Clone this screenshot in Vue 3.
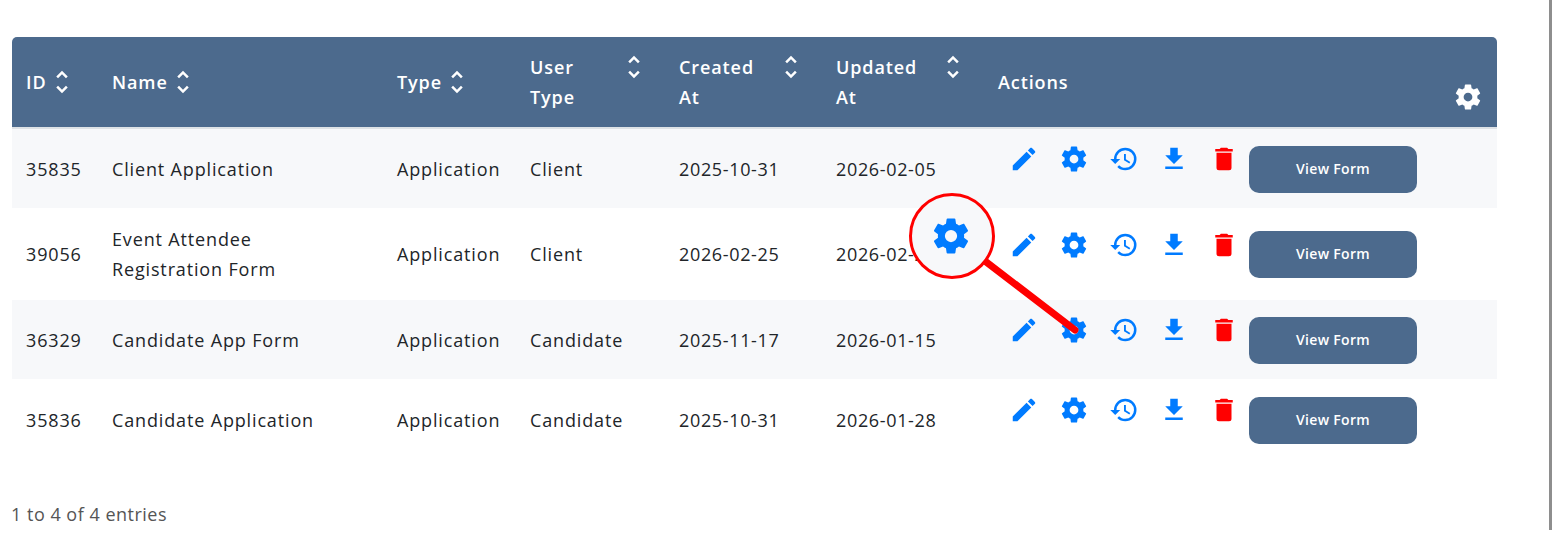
<script setup>
const icons = {
  pencil: 'M20.71,7.04C21.1,6.65 21.1,6 20.71,5.63L18.37,3.29C18,2.9 17.35,2.9 16.96,3.29L15.12,5.12L18.87,8.87M3,17.25V21H6.75L17.81,9.93L14.06,6.18L3,17.25Z',
  cog: 'M12,15.5A3.5,3.5 0 0,1 8.5,12A3.5,3.5 0 0,1 12,8.5A3.5,3.5 0 0,1 15.5,12A3.5,3.5 0 0,1 12,15.5M19.43,12.97C19.47,12.65 19.5,12.33 19.5,12C19.5,11.67 19.47,11.34 19.43,11L21.54,9.37C21.73,9.22 21.78,8.95 21.66,8.73L19.66,5.27C19.54,5.05 19.27,4.96 19.05,5.05L16.56,6.05C16.04,5.66 15.5,5.32 14.87,5.07L14.5,2.42C14.46,2.18 14.25,2 14,2H10C9.75,2 9.54,2.18 9.5,2.42L9.13,5.07C8.5,5.32 7.96,5.66 7.44,6.05L4.95,5.05C4.73,4.96 4.46,5.05 4.34,5.27L2.34,8.73C2.21,8.95 2.27,9.22 2.46,9.37L4.57,11C4.53,11.34 4.5,11.67 4.5,12C4.5,12.33 4.53,12.65 4.57,12.97L2.46,14.63C2.27,14.78 2.21,15.05 2.34,15.27L4.34,18.73C4.46,18.95 4.73,19.03 4.95,18.95L7.44,17.94C7.96,18.34 8.5,18.68 9.13,18.93L9.5,21.58C9.54,21.82 9.75,22 10,22H14C14.25,22 14.46,21.82 14.5,21.58L14.87,18.93C15.5,18.67 16.04,18.34 16.56,17.94L19.05,18.95C19.27,19.03 19.54,18.95 19.66,18.73L21.66,15.27C21.78,15.05 21.73,14.78 21.54,14.63L19.43,12.97Z',
  history: 'M13.5,8H12V13L16.28,15.54L17,14.33L13.5,12.25V8M13,3A9,9 0 0,0 4,12H1L4.96,16.03L9,12H6A7,7 0 0,1 13,5A7,7 0 0,1 20,12A7,7 0 0,1 13,19C11.07,19 9.32,18.21 8.06,16.94L6.64,18.36C8.27,20 10.5,21 13,21A9,9 0 0,0 22,12A9,9 0 0,0 13,3Z',
  download: 'M5,20H19V18H5M19,9H15V3H9V9H5L12,16L19,9Z',
  trash: 'M19,4H15.5L14.5,3H9.5L8.5,4H5V6H19M6,19A2,2 0 0,0 8,21H16A2,2 0 0,0 18,19V7H6V19Z',
  sort: 'M12,18.17L8.83,15L7.41,16.41L12,21L16.59,16.41L15.17,15M12,5.83L15.17,9L16.59,7.59L12,3L7.41,7.59L8.83,9L12,5.83Z',
}
const actions = ['pencil', 'cog', 'history', 'download', 'trash']
const rows = [
  { id: '35835', name: 'Client Application', type: 'Application', user: 'Client', created: '2025-10-31', updated: '2026-02-05' },
  { id: '39056', name: 'Event Attendee Registration Form', type: 'Application', user: 'Client', created: '2026-02-25', updated: '2026-02-25' },
  { id: '36329', name: 'Candidate App Form', type: 'Application', user: 'Candidate', created: '2025-11-17', updated: '2026-01-15' },
  { id: '35836', name: 'Candidate Application', type: 'Application', user: 'Candidate', created: '2025-10-31', updated: '2026-01-28' },
]
</script>

<template>
  <div class="page">
    <table class="grid">
      <colgroup>
        <col class="c-id" /><col class="c-name" /><col class="c-type" /><col class="c-user" />
        <col class="c-created" /><col class="c-updated" /><col class="c-actions" />
      </colgroup>
      <thead>
        <tr>
          <th><span class="inline">ID<svg class="sort" viewBox="0 0 24 24"><path :d="icons.sort" /></svg></span></th>
          <th><span class="inline">Name<svg class="sort" viewBox="0 0 24 24"><path :d="icons.sort" /></svg></span></th>
          <th><span class="inline">Type<svg class="sort" viewBox="0 0 24 24"><path :d="icons.sort" /></svg></span></th>
          <th><div class="split"><span>User<br />Type</span><svg class="sort" viewBox="0 0 24 24"><path :d="icons.sort" /></svg></div></th>
          <th><div class="split"><span>Created<br />At</span><svg class="sort" viewBox="0 0 24 24"><path :d="icons.sort" /></svg></div></th>
          <th><div class="split"><span>Updated<br />At</span><svg class="sort" viewBox="0 0 24 24"><path :d="icons.sort" /></svg></div></th>
          <th>
            <div class="actions-head">
              <span>Actions</span>
              <svg class="icon head-gear" viewBox="0 0 24 24"><path :d="icons.cog" /></svg>
            </div>
          </th>
        </tr>
      </thead>
      <tbody>
        <tr v-for="row in rows" :key="row.id">
          <td>{{ row.id }}</td>
          <td><div class="name">{{ row.name }}</div></td>
          <td>{{ row.type }}</td>
          <td>{{ row.user }}</td>
          <td class="date">{{ row.created }}</td>
          <td class="date">{{ row.updated }}</td>
          <td class="action-cell">
            <div class="actions">
              <span v-for="a in actions" :key="a" class="action">
                <svg class="icon" :class="a === 'trash' ? 'danger' : 'primary'" viewBox="0 0 24 24"><path :d="icons[a]" /></svg>
              </span>
              <button class="view" type="button">View Form</button>
            </div>
          </td>
        </tr>
      </tbody>
    </table>
    <p class="count">1 to 4 of 4 entries</p>

    <svg class="callout-line" width="120" height="90" viewBox="0 0 120 90">
      <line x1="2" y1="2" x2="92" y2="71" stroke="#ff0000" stroke-width="7" stroke-linecap="round" />
    </svg>
    <div class="callout">
      <svg class="callout-gear" viewBox="0 0 24 24"><path :d="icons.cog" /></svg>
    </div>
    <div class="scrollbar"></div>
  </div>
</template>

<style scoped>
.page {
  position: relative;
  width: 1552px;
  height: 554px;
  box-sizing: border-box;
  padding: 37px 55px 0 12px;
  overflow: hidden;
  background: #fff;
  font-family: "Open Sans", "Noto Sans", sans-serif;
  font-size: 18px;
  letter-spacing: 0.85px;
  color: #212529;
}
.grid {
  width: 1485px;
  table-layout: fixed;
  border-collapse: separate;
  border-spacing: 0;
}
.c-id { width: 86px; }
.c-name { width: 285px; }
.c-type { width: 133px; }
.c-user { width: 149px; }
.c-created { width: 157px; }
.c-updated { width: 162px; }
.c-actions { width: 513px; }
th {
  height: 60px;
  padding: 15px 14px;
  background: #4c6a8d;
  border-bottom: 2px solid #dee2e6;
  color: #fff;
  font-weight: 600;
  letter-spacing: 0.9px;
  line-height: 30px;
  text-align: left;
  vertical-align: middle;
}
th:first-child { border-top-left-radius: 5px; }
th:last-child { border-top-right-radius: 5px; }
.inline {
  display: flex;
  align-items: center;
}
.split {
  display: flex;
  justify-content: space-between;
  align-items: flex-start;
  padding-right: 2px;
}
.sort {
  width: 30px;
  height: 30px;
  fill: #fff;
  flex: none;
}
.actions-head {
  display: flex;
  justify-content: space-between;
  align-items: center;
  height: 60px;
}
.head-gear {
  align-self: flex-end;
  fill: #fff;
}
td {
  padding: 16px 14px;
  line-height: 30px;
  vertical-align: middle;
  font-weight: 400;
}
.date { letter-spacing: 0.65px; }
.name { max-width: 230px; }
tbody tr:nth-child(odd) td { background: #f7f8fa; }
tbody tr:last-child td { padding-top: 17px; }
.action-cell {
  padding: 17px 14px 15px;
}
tbody tr:nth-child(2) .action-cell { padding-top: 16px; }
tbody tr:nth-child(2) .action { margin-top: -1px; }
tbody tr:last-child .action-cell { padding-top: 18px; }
.actions {
  display: flex;
  align-items: flex-start;
  height: 47px;
  margin-left: 1px;
}
.action {
  width: 50px;
  height: 30px;
  margin-top: -2px;
  display: flex;
  justify-content: center;
  box-sizing: border-box;
}
.icon {
  width: 30px;
  height: 30px;
  display: block;
  flex: none;
}
.primary { fill: #007bff; }
.danger { fill: #ff0000; }
.view {
  width: 168px;
  height: 47px;
  padding: 0 0 2px;
  border: none;
  border-radius: 10px;
  background: #4c6a8d;
  color: #fff;
  font-family: inherit;
  font-size: 14px;
  font-weight: 600;
  letter-spacing: 0.3px;
}
.count {
  margin: 40px 0 0 -1px;
  line-height: 30px;
  letter-spacing: 0.5px;
  color: #555;
}
.callout {
  position: absolute;
  left: 909px;
  top: 193px;
  width: 86px;
  height: 86px;
  box-sizing: border-box;
  border: 3px solid #ff0000;
  border-radius: 50%;
  background: #f7f8fa;
  display: flex;
  align-items: center;
  justify-content: center;
}
.callout-gear {
  width: 42px;
  height: 42px;
  fill: #007bff;
  margin-left: -3px;
  filter: blur(0.4px);
}
.callout-line {
  position: absolute;
  left: 983px;
  top: 259px;
}
.scrollbar {
  position: absolute;
  right: 0;
  top: 0;
  width: 3px;
  height: 530px;
  background: #8e8e8e;
}
</style>
